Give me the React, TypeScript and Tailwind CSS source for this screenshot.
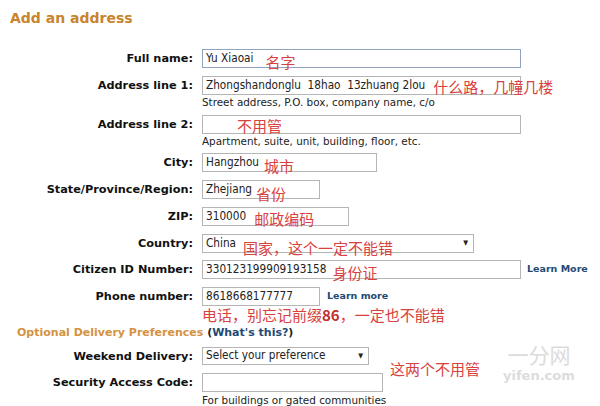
import { ReactNode } from 'react'

const note = "text-[#d8423e] text-[15px] leading-none font-['Noto_Sans_CJK_SC',sans-serif] whitespace-nowrap"

function Row({ label, children, className = '' }: { label: string; children: ReactNode; className?: string }) {
  return (
    <div className={'flex items-start ' + className}>
      <div className="w-[193px] shrink-0 text-right text-[11.3px] font-bold leading-[19px] text-[#111]">{label}</div>
      <div className="ml-[9px]">{children}</div>
    </div>
  )
}

function Field({ w, value, children, select, h = 'h-[19px]', blue }: { w: string; value?: string; children?: ReactNode; select?: boolean; h?: string; blue?: boolean }) {
  return (
    <div
      className={`${w} ${h} relative flex items-center border bg-white pl-[3px] text-[11.7px] text-[#222] whitespace-nowrap font-['DejaVu_Sans_Condensed','DejaVu_Sans',sans-serif] ${
        blue ? 'border-[#8ea4bf]' : 'border-[#b5b5b5]'
      }`}
    >
      {value && <span className="whitespace-pre">{value}</span>}
      {children}
      {select && <span className="absolute right-[5px] top-[3px] text-[7px] text-[#222]">▼</span>}
    </div>
  )
}

function Helper({ children }: { children: ReactNode }) {
  return <div className="mt-[1px] text-[10.4px] leading-[13px] text-[#222]">{children}</div>
}

export default function App() {
  return (
    <div className="relative h-[406px] w-[600px] overflow-hidden bg-white font-['DejaVu_Sans',sans-serif]">
      <h1 className="pl-[10px] pt-[9px] text-[14px] font-bold leading-[18px] text-[#c8842e]">Add an address</h1>

      <div className="mt-[22px] flex flex-col">
        <Row label="Full name:">
          <Field w="w-[319px]" value="Yu Xiaoai" blue>
            <span className={note + ' ml-[12px] translate-y-[3px]'}>名字</span>
          </Field>
        </Row>

        <Row label="Address line 1:" className="mt-[8px]">
          <Field w="w-[319px]" value="Zhongshandonglu  18hao  13zhuang 2lou">
            <span className={note + ' ml-[8px] translate-y-[1px]'}>什么路，几幢几楼</span>
          </Field>
          <Helper>Street address, P.O. box, company name, c/o</Helper>
        </Row>

        <Row label="Address line 2:" className="mt-[6px]">
          <Field w="w-[319px]">
            <span className={note + ' ml-[31px] translate-y-[1px]'}>不用管</span>
          </Field>
          <Helper>Apartment, suite, unit, building, floor, etc.</Helper>
        </Row>

        <Row label="City:" className="mt-[5px]">
          <Field w="w-[175px]" value="Hangzhou">
            <span className={note + ' ml-[5px] translate-y-[3px]'}>城市</span>
          </Field>
        </Row>

        <Row label="State/Province/Region:" className="mt-[8px]">
          <Field w="w-[118px]" value="Zhejiang">
            <span className={note + ' ml-[4px] translate-y-[4px]'}>省份</span>
          </Field>
        </Row>

        <Row label="ZIP:" className="mt-[8px]">
          <Field w="w-[147px]" value="310000">
            <span className={note + ' ml-[8px] translate-y-[2px]'}>邮政编码</span>
          </Field>
        </Row>

        <Row label="Country:" className="mt-[8px]">
          <Field w="w-[272px]" value="China" select>
            <span className={note + ' ml-[7px] translate-y-[4px]'}>国家，这个一定不能错</span>
          </Field>
        </Row>

        <Row label="Citizen ID Number:" className="mt-[7px]">
          <div className="flex items-center">
            <Field w="w-[319px]" value="330123199909193158">
              <span className={note + ' ml-[6px] translate-y-[3px]'}>身份证</span>
            </Field>
            <a className="ml-[6px] text-[9.5px] font-bold text-[#234a74]">Learn More</a>
          </div>
        </Row>

        <Row label="Phone number:" className="mt-[8px]">
          <div className="flex items-center">
            <Field w="w-[118px]" value="8618668177777" />
            <a className="ml-[7px] text-[9.5px] font-bold text-[#234a74]">Learn more</a>
          </div>
          <div className="mt-[1px] text-[15px] leading-[16px] text-[#d8423e] font-['Noto_Sans_CJK_SC',sans-serif] whitespace-nowrap">
            电话，别忘记前缀<span className="font-bold text-[#c0302c]">86</span>，一定也不能错
          </div>
        </Row>

        <div className="mt-[3px] pl-[17px] text-[11px] font-bold leading-[14px] text-[#d4923f]">
          Optional Delivery Preferences <span className="text-[#222]">(</span>
          <a className="text-[#234a74]">What's this?</a>
          <span className="text-[#222]">)</span>
        </div>

        <Row label="Weekend Delivery:" className="mt-[7px]">
          <Field w="w-[167px]" h="h-[18px]" value="Select your preference" select />
        </Row>

        <Row label="Security Access Code:" className="mt-[7px]">
          <Field w="w-[181px]" h="h-[19px]" />
          <div className="mt-[2px] text-[10.4px] leading-[13px] text-[#222]">For buildings or gated communities</div>
        </Row>
      </div>

      <div className="absolute left-[390px] top-[358px] text-[#d8423e] text-[15px] font-['Noto_Sans_CJK_SC',sans-serif]">
        这两个不用管
      </div>

      <div className="absolute left-[503px] top-[342px] flex flex-col items-center gap-[3px] text-[#dcdcdc]">
        <span className="text-[21px] leading-[24px] font-['Noto_Sans_CJK_SC',sans-serif]">一分网</span>
        <span className="text-[13px] font-bold leading-[14px]">yifen.com</span>
      </div>
    </div>
  )
}
